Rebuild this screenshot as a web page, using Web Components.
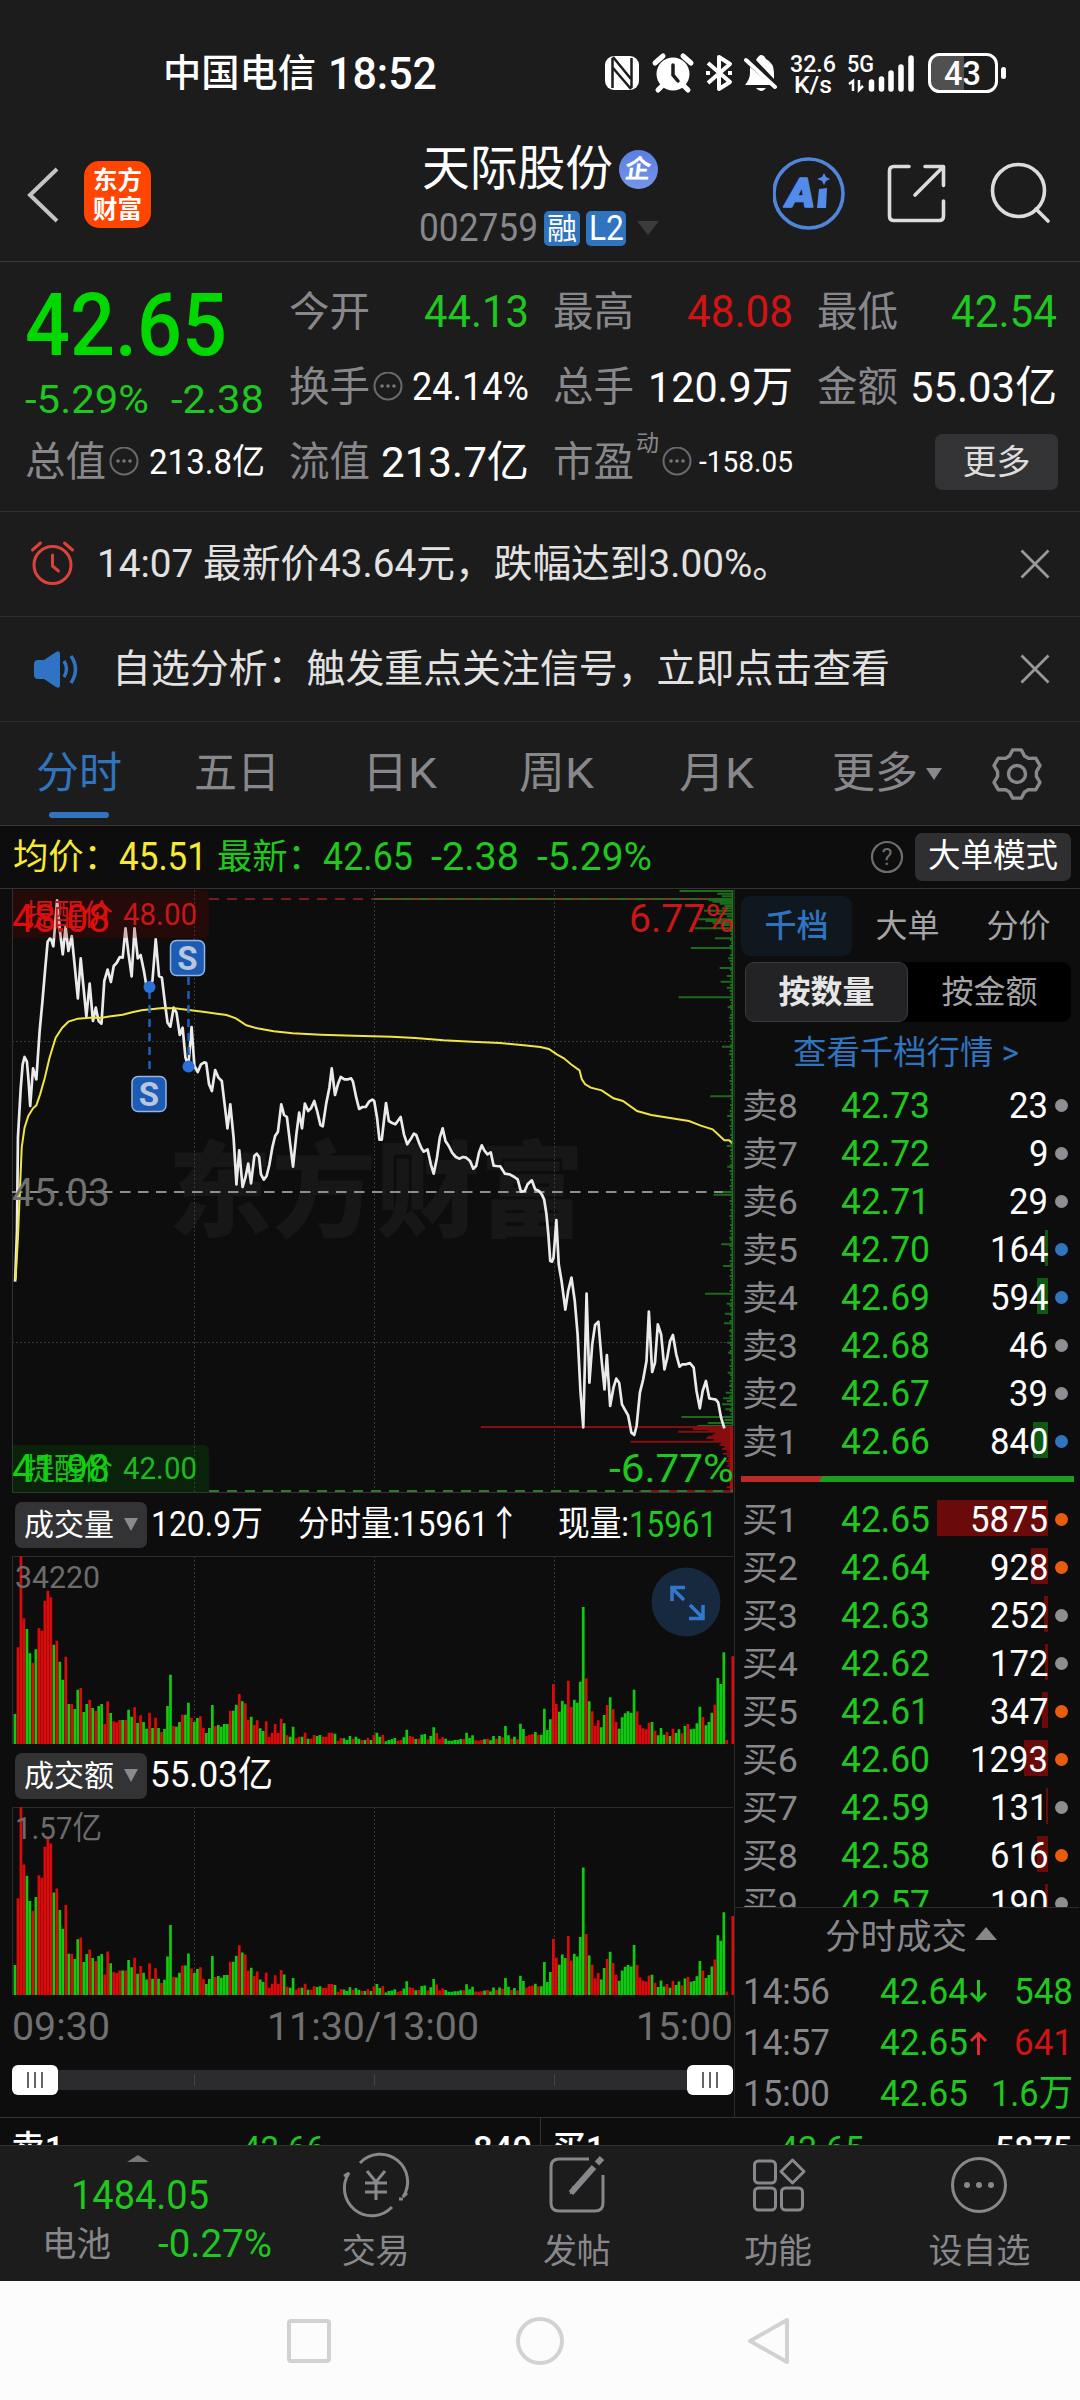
<!DOCTYPE html>
<html lang="zh-CN">
<head>
<meta charset="utf-8">
<title>天际股份 002759</title>
<style>
  body {
    margin: 0;
    width: 1080px;
    background: #0d0d0d;
    color: #fff;
    font-family: Roboto, "Noto Sans CJK SC", sans-serif;
  }
</style>
</head>
<body>
<stock-page></stock-page>

<script>
const UP = "#d01313";
const GREEN = "#1fc71f";

function define(name, html, setup) {
  const template = document.createElement("template");
  template.innerHTML = html;
  customElements.define(name, class extends HTMLElement {
    constructor() {
      super();
      this.attachShadow({ mode: "open" });
      this.shadowRoot.append(template.content.cloneNode(true));
    }
    connectedCallback() {
      if (setup) setup(this, this.shadowRoot);
    }
  });
}

/* ---------- status bar ---------- */
define("status-bar", `
<style>
  :host { display: flex; height: 96px; padding-top: 50px; box-sizing: border-box; background: #1c1c1c; }
  .left { display: flex; gap: 12px; width: 437px; margin-left: 163px; line-height: 47px; font-size: 38px; font-weight: 500; }
  svg { display: block; }
</style>
<div class="left">
  <fit-text w="153">中国电信</fit-text>
  <fit-text w="109" style="font-size:45px">18:52</fit-text>
</div>
<svg width="410" height="46" viewBox="600 50 410 46" fill="#fff">
  <rect x="605" y="56" width="34" height="34" rx="9"/>
  <path d="M612.500 58v30M631.500 58v30" stroke="#1c1c1c" stroke-width="2.500"/>
  <path d="M613 57l18 22M613 68l18 21" stroke="#1c1c1c" stroke-width="2.500"/>
  <circle cx="673" cy="74" r="16.5"/>
  <path d="M655 63l8-7M691 63l-8-7M662 86l-4 4M684 86l4 4" stroke="#fff" stroke-width="5" stroke-linecap="round"/>
  <path d="M673 65v10l5 6" fill="none" stroke="#1c1c1c" stroke-width="3.500" stroke-linecap="round"/>
  <path d="M708 63l22 19-11 7V57l11 7-22 19" fill="none" stroke="#fff" stroke-width="4" stroke-linejoin="round"/>
  <path d="M706 73h4M728 73h4" stroke="#fff" stroke-width="4"/>
  <path d="M756 60q3-5 5-5q3 0 5 4q8 4 8 14v6zM750 67l21 18h-26q5-6 5-12zM756 88h10q-5 6-10 0z"/>
  <path d="M746 60l29 27" stroke="#fff" stroke-width="4" stroke-linecap="round"/>
  <text x="790" y="71.500" font-size="24" font-weight="500" textLength="46" lengthAdjust="spacingAndGlyphs">32.6</text>
  <text x="794" y="92.500" font-size="24" font-weight="500" textLength="38" lengthAdjust="spacingAndGlyphs">K/s</text>
  <text x="847" y="72" font-size="24" font-weight="500" textLength="27" lengthAdjust="spacingAndGlyphs">5G</text>
  <path d="M849 84l4-3v10M859 80v10l4-4" fill="none" stroke="#fff" stroke-width="2.500"/>
  <path d="M871.500 82v7M881.500 79v10M891 73v16M901 67v22M911 58v31" stroke="#fff" stroke-width="5.500" stroke-linecap="round"/>
  <path d="M938 55h26v36h-26q-8 0-8-8V63q0-8 8-8z" fill="#505050"/>
  <rect x="929.500" y="54.500" width="67" height="37" rx="10" fill="none" stroke="#fff" stroke-width="3"/>
  <rect x="1001" y="67" width="5" height="12" rx="2.500"/>
  <text x="944" y="85" font-size="34" font-weight="500" textLength="37" lengthAdjust="spacingAndGlyphs">43</text>
</svg>
`);

/* ---------- title bar ---------- */
define("title-bar", `
<style>
  :host { display: flex; height: 165px; background: #1c1c1c; border-bottom: 1px solid #373737; }
  .nav { display: flex; gap: 25px; width: 394px; padding: 65px 0 0 25px; }
  svg { display: block; }
  .logo {
    display: grid; place-content: center; width: 67px; height: 67px; border-radius: 15px;
    background: #ff4500; font-size: 24.500px; line-height: 29px; font-weight: 700; text-align: center;
  }
  .name { display: flex; align-items: center; gap: 6px; height: 60px; margin: 43px 0 0 3px; font-size: 48px; line-height: 60px; }
  .badge {
    display: grid; place-items: center; width: 39px; height: 39px; border-radius: 50%;
    background: linear-gradient(#5b7fe2, #7595ea); font-size: 26px; font-weight: 700; line-height: 39px;
  }
  .badge i { transform: skewX(-8deg); font-style: normal; }
  .code { display: flex; align-items: center; gap: 6px; height: 58px; font-size: 38px; line-height: 58px; color: #88888c; }
  .tag { height: 35px; border-radius: 5px; background: #3073be; color: #fff; font-size: 30px; line-height: 35px; text-align: center; }
  .tools { margin: 60px 0 0 auto; padding-right: 25px; }
</style>
<div class="nav">
  <svg width="34" height="68" viewBox="25 161 34 68"><path d="M57 169L30 195l27 26" fill="none" stroke="#c4c4c4" stroke-width="4"/></svg>
  <div class="logo"><span>东方</span><span>财富</span></div>
</div>
<div>
  <div class="name"><fit-text w="191">天际股份</fit-text><span class="badge"><i>企</i></span></div>
  <div class="code"><fit-text w="119">002759</fit-text>
    <span class="tag" style="width:36px">融</span><span class="tag" style="width:40px;font-size:35px"><fit-text w="35">L2</fit-text></span>
    <svg width="28" height="14" viewBox="0 0 28 14"><path d="M5 0h22L16 14z" fill="#3c3c3c"/></svg>
  </div>
</div>
<svg class="tools" width="282" height="76" viewBox="773 157 282 76" fill="none" stroke="#dcdcdc" stroke-width="3.600" stroke-linecap="round" stroke-linejoin="round">
  <g stroke="#4f86d9"><circle cx="808.500" cy="194.500" r="34.500"/></g>
  <text x="786" y="208" fill="#528bea" stroke="#528bea" stroke-width="1.500" font-size="40" font-weight="900" font-style="italic" textLength="29" lengthAdjust="spacingAndGlyphs">A</text>
  <path d="M819 190l8-1-1 20h-9z" fill="#528bea" stroke="none"/>
  <path d="M824 174l2 4 4 2-4 2-2 4-2-4-5-2 5-2z" fill="#528bea" stroke="none"/>
  <path d="M909 167.500h-15q-4.500 0-4.500 4.500v45q0 4.500 4.500 4.500h45q4.500 0 4.500-4.500v-15M925 167.500h18.500v19M942 169l-27 27"/>
  <circle cx="1018.500" cy="191.500" r="26"/><path d="M1036 210l12 12"/>
</svg>
`);

/* ---------- quote header ---------- */
define("dots-icon", `
<style>:host { display: block; } svg { display: block; }</style>
<svg width="32" height="32" viewBox="0 0 32 32" fill="#77777b"><circle cx="16" cy="14" r="13.500" fill="none" stroke="#6a6a6e" stroke-width="2"/>
<circle cx="10" cy="14" r="1.800"/><circle cx="16" cy="14" r="1.800"/><circle cx="22" cy="14" r="1.800"/></svg>
`);

define("quote-panel", `
<style>
  :host {
    display: grid; grid-template-columns: repeat(4, 240px); column-gap: 24px; grid-template-rows: repeat(3, 75px);
    height: 250px; padding: 13px 24px 0 25px; box-sizing: border-box; background: #1c1c1c;
    border-bottom: 1px solid #303030; font-size: 44px; line-height: 75px;
  }
  .main { grid-row: span 2; color: #00d800; }
  .main > fit-text { display: block; font-size: 88px; font-weight: 500; line-height: 99px; }
  .change { display: flex; justify-content: space-between; font-size: 39px; line-height: 53px; color: ${GREEN}; width: 239px; }
  .cell { display: flex; align-items: center; justify-content: space-between; }
  .cell b { font-weight: 400; font-size: 40.500px; color: #88888c; display: flex; align-items: center; gap: 2px; }
  .up { color: ${UP}; } .down { color: ${GREEN}; }
  sup { font-size: 23px; line-height: 23px; align-self: flex-start; margin-top: 7px; }
  .more { justify-self: end; align-self: center; margin: -2px -1px 0 0; width: 123px; height: 56px; border-radius: 7px; background: #333335; color: #ddd; font-size: 34px; line-height: 56px; text-align: center; }
</style>
<div class="main">
  <fit-text w="202">42.65</fit-text>
  <div class="change"><fit-text w="124">-5.29%</fit-text><fit-text w="93">-2.38</fit-text></div>
</div>
<div class="cell"><b>今开</b><fit-text class="down" w="105">44.13</fit-text></div>
<div class="cell"><b>最高</b><fit-text class="up" w="106">48.08</fit-text></div>
<div class="cell"><b>最低</b><fit-text class="down" w="106">42.54</fit-text></div>
<div class="cell"><b>换手<dots-icon></dots-icon></b><fit-text w="117" style="font-size:38px">24.14%</fit-text></div>
<div class="cell"><b>总手</b><fit-text w="145" style="font-size:43px">120.9万</fit-text></div>
<div class="cell"><b>金额</b><fit-text w="147" style="font-size:43px">55.03亿</fit-text></div>
<div class="cell"><b>总值<dots-icon></dots-icon></b><fit-text w="116" style="font-size:35px">213.8亿</fit-text></div>
<div class="cell"><b>流值</b><fit-text w="148" style="font-size:43px">213.7亿</fit-text></div>
<div class="cell"><b>市盈<sup>动</sup><dots-icon></dots-icon></b><fit-text w="94" style="font-size:29px">-158.05</fit-text></div>
<div class="more">更多</div>
`);

/* ---------- notices ---------- */
define("notice-row", `
<style>
  :host { display: flex; align-items: center; height: 104px; border-bottom: 1px solid #2c2c2c; background: #1c1c1c; color: #e2e2e2; font-size: 39px; line-height: 104px; }
  .close { margin-left: auto; margin-right: 29px; }
  svg { display: block; }
</style>
<slot name="icon"></slot><slot></slot>
<svg class="close" width="32" height="32" viewBox="0 0 32 32"><path d="M2.500 2.500l27 27M29.500 2.500l-27 27" stroke="#999" stroke-width="2.800"/></svg>
`);

/* ---------- period tabs ---------- */
define("period-tabs", `
<style>
  :host { display: flex; align-items: center; height: 103px; background: #1c1c1c; border-bottom: 1px solid #373737; font-size: 43px; line-height: 103px; color: #88888c; }
  .on { color: #3073be; display: grid; justify-items: center; }
  .on::after { content: ""; width: 60px; height: 6px; margin-top: -13px; margin-bottom: 7px; border-radius: 3px; background: #3073be; }
  span { flex: none; } svg { display: block; }
</style>
<span class="on" style="margin-left:36px">分时</span>
<span style="margin-left:72px">五日</span>
<span style="margin-left:82px"><fit-text w="75">日K</fit-text></span>
<span style="margin-left:82px"><fit-text w="75">周K</fit-text></span>
<span style="margin-left:85px"><fit-text w="75">月K</fit-text></span>
<span style="margin-left:78px">更多</span>
<svg width="16" height="12" viewBox="0 0 16 12" style="margin-left:8px"><path d="M0 0h16L8 12z" fill="#88888c"/></svg>
<svg class="gear" width="54" height="54" viewBox="-27 -27 54 54" style="margin-left:48px" fill="none" stroke="#88888c" stroke-width="3.400" stroke-linejoin="round"><path/><circle r="8.500"/></svg>
`, (host, root) => {
  const points = [];
  for (let k = 0; k < 6; k++) {
    for (const [a, r] of [[-23, 19.5], [-10, 24.5], [10, 24.5], [23, 19.5]]) {
      const t = (k * 60 + a - 90) * Math.PI / 180;
      points.push((r * Math.cos(t)).toFixed(1) + " " + (r * Math.sin(t)).toFixed(1));
    }
  }
  root.querySelector(".gear path").setAttribute("d", "M" + points.join("L") + "Z");
});

define("average-bar", `
<style>
  :host { display: flex; height: 63px; align-items: center; font-size: 35px; line-height: 63px; color: ${GREEN}; padding-left: 13px; border-bottom: 1px solid #333; box-sizing: border-box; }
  .avg { color: #f7ea35; } fit-text { flex: none; }
  .mode { width: 156px; height: 48px; border-radius: 7px; background: #2f2f31; color: #fff; font-size: 32.500px; line-height: 47px; text-align: center; margin-right: 9px; }
  svg { margin-left: auto; margin-right: 11px; }
</style>
<fit-text class="avg" w="106">均价：</fit-text><fit-text class="avg" w="88" style="font-size:38px">45.51</fit-text>
<fit-text w="106" style="margin-left:10px">最新：</fit-text><fit-text w="90" style="font-size:38px">42.65</fit-text>
<fit-text w="88" style="font-size:38px;margin-left:18px">-2.38</fit-text>
<fit-text w="115" style="font-size:38px;margin-left:18px">-5.29%</fit-text>
<svg width="34" height="34" viewBox="0 0 34 34"><circle cx="17" cy="17" r="15" fill="none" stroke="#6e6e72" stroke-width="2.200"/><text x="17" y="25" font-size="23" fill="#6e6e72" text-anchor="middle">?</text></svg>
<span class="mode">大单模式</span>
`);

/* ---------- price chart ---------- */
// chart points live on a 1553-wide grid, three units to a pixel vertically
const price = "32,1232 36,1080 38,800 44,650 48,580 52,558 57,572 60,620 64,705 70,592 77,625 84,480 90,390 96,290 101,212 106,202 109,208 113,226 121,88 127,180 133,250 139,168 145,240 152,195 158,280 165,382 171,262 177,350 183,437 190,338 197,450 203,410 209,450 215,458 221,330 228,296 235,333 241,285 247,276 254,258 260,260 266,172 272,245 279,316 285,172 292,262 298,252 305,300 311,350 317,340 323,330 330,205 337,315 343,320 349,390 355,455 361,467 368,410 374,425 381,492 387,470 393,560 399,585 406,468 412,585 419,603 426,580 433,574 437,576 443,640 449,660 456,597 463,620 470,630 476,700 482,772 488,700 495,800 501,940 507,838 514,948 520,920 526,878 532,937 539,855 544,848 549,858 553,910 559,926 565,915 571,880 577,830 583,795 589,782 596,700 602,732 608,738 615,820 621,887 628,790 634,725 640,772 646,698 653,720 659,712 666,690 672,720 679,762 684,766 691,700 698,650 703,592 710,672 716,640 722,618 730,625 738,625 744,622 748,632 755,680 761,714 768,708 775,708 782,692 789,686 793,690 799,740 804,806 809,806 818,696 824,750 831,756 838,760 843,750 849,738 856,790 863,820 870,805 877,788 882,792 888,815 893,832 898,842 906,835 913,880 919,908 926,860 932,800 938,772 944,810 951,825 958,845 966,858 974,863 981,858 988,860 996,870 1003,893 1009,885 1015,845 1021,823 1027,840 1033,850 1040,844 1046,884 1052,885 1060,886 1070,908 1080,910 1090,918 1097,925 1104,962 1112,960 1118,940 1127,928 1134,955 1142,960 1148,970 1153,985 1158,1030 1162,1090 1166,1170 1170,1172 1173,1160 1179,1047 1184,1180 1190,1230 1198,1316 1204,1260 1211,1220 1218,1290 1224,1390 1230,1560 1236,1669 1239,1500 1243,1268 1249,1535 1255,1420 1261,1362 1268,1352 1275,1470 1281,1555 1286,1452 1293,1605 1300,1550 1306,1523 1312,1535 1318,1600 1325,1618 1331,1633 1338,1685 1344,1692 1349,1665 1356,1565 1363,1525 1370,1470 1375,1322 1382,1503 1388,1475 1394,1360 1401,1390 1408,1495 1414,1460 1420,1410 1426,1392 1433,1450 1440,1487 1446,1480 1454,1480 1462,1476 1470,1490 1476,1560 1483,1612 1489,1560 1496,1530 1503,1582 1510,1584 1517,1586 1522,1595 1528,1640 1535,1672";
const average = "33,1225 38,1100 46,830 52,770 60,735 70,712 77,703 85,670 95,620 105,560 118,500 132,470 145,452 165,443 190,440 215,440 235,436 260,431 280,424 300,418 320,415 345,411 370,412 400,417 430,422 460,428 480,432 500,442 522,463 545,472 580,481 620,487 680,491 750,494 830,497 880,501 940,508 1000,512 1060,516 1110,523 1145,528 1163,534 1180,550 1195,562 1210,580 1228,598 1233,625 1240,640 1252,650 1275,658 1300,682 1320,690 1350,720 1380,732 1420,741 1460,750 1485,764 1510,775 1535,808 1545,808 1553,818";
// order depth: y, left end
const asks = [[60,1440],[68,1520],[76,1530],[84,1500],[88,1502],[92,1510],[98,1525],[105,1535],[112,1530],[119,1492],[128,1520],[136,1540],[145,1480],[150,1495],[156,1510],[162,1530],[172,1472],[202,1515],[231,1464],[262,1543],[291,1525],[315,1540],[332,1527],[350,1540],[379,1438],[409,1542],[440,1545],[527,1530],[550,1545],[676,1505],[735,1541],[825,1540],[887,1541],[963,1532],[971,1512],[1100,1545],[1120,1528],[1185,1532],[1268,1494],[1298,1540],[1328,1536],[1357,1534],[1380,1545],[1415,1541],[1445,1543],[1505,1542],[1545,1545],[1565,1538],[1582,1532],[1590,1540],[1600,1530],[1615,1537],[1638,1444],[1647,1535],[1656,1500],[1665,1478]];
const bids = [[1668,1019],[1674,1468],[1678,1500],[1682,1437],[1687,1515],[1692,1510],[1697,1500],[1701,1497],[1706,1512],[1712,1336],[1717,1528],[1722,1525],[1728,1535],[1734,1530],[1741,1540],[1748,1532],[1756,1540],[1763,1543],[1770,1536],[1778,1543],[1786,1540],[1794,1545],[1802,1542],[1812,1545],[1824,1543],[1836,1546],[1848,1540],[1860,1355]];

define("price-chart", `
<style>
  :host { display: block; height: 604px; }
  svg { display: block; }
  .grid path { stroke: #3a3a3a; stroke-width: 1; stroke-dasharray: 2 2; }
  .lines * { vector-effect: non-scaling-stroke; fill: none; }
  .s rect { fill: #1c5cb4; stroke: #96b4de; stroke-width: 1.500; }
  .s text { fill: #b8c6de; font-size: 33px; font-weight: 700; text-anchor: middle; }
</style>
<svg width="734" height="604" viewBox="0 888 734 604">
  <text x="168" y="1228" font-size="104" font-weight="900" fill="#171717" textLength="416" lengthAdjust="spacingAndGlyphs">东方财富</text>
  <g class="grid"><path d="M194.500 889v602M374.500 889v602M554.500 889v602M12 1040.500h721M12 1341.500h721"/></g>
  <path d="M12.500 888v603.500H733" fill="none" stroke="#333"/>
  <path d="M12 1191h720" stroke="#8e8e8e" stroke-width="2" stroke-dasharray="10.500 7.500"/>
  <path d="M209 898H374" stroke="#7c1c1c" stroke-width="2" stroke-dasharray="10 8"/>
  <path d="M374 898h359" stroke="#2b6a26" stroke-width="2"/><path d="M374 898h359" stroke="#7a3a1e" stroke-width="1.500" stroke-dasharray="10 8"/>
  <g class="lines" transform="translate(0 870) scale(.4719 .33333)">
    <path class="asks" stroke="#1b6b1b" stroke-width="2"/>
    <path class="bids" stroke="#850f0f" stroke-width="2"/>
    <polyline class="price" stroke="#ebebeb" stroke-width="2.700" stroke-linejoin="round"/>
    <polyline class="avg" stroke="#f2e443" stroke-width="2"/>
  </g>
  <path d="M732.500 889v536" stroke="#1a7a1a" stroke-width="1.500"/><path d="M731.500 1426v65" stroke="#b00c0c" stroke-width="3"/>
  <path d="M209 1490H733" stroke="#2e7a28" stroke-width="2" stroke-dasharray="10 8"/>
  <path d="M12 889h191q6 0 6 6v36q0 6-6 6H12z" fill="#7a0000" fill-opacity=".22"/>
  <path d="M12 1444h191q6 0 6 6v41H12z" fill="#007a00" fill-opacity=".2"/>
  <g font-size="30" fill="#c81717">
    <text x="25" y="924" textLength="88">提醒价</text>
    <text x="123" y="923.500" font-size="32" textLength="74" lengthAdjust="spacingAndGlyphs">48.00</text>
    <text x="25" y="1478" fill="#1fb81f" textLength="88">提醒价</text>
    <text x="123" y="1477.500" font-size="32" fill="#1fb81f" textLength="74" lengthAdjust="spacingAndGlyphs">42.00</text>
  </g>
  <g font-size="38" fill="#e00c0c">
    <text x="12" y="930.500" textLength="98" lengthAdjust="spacingAndGlyphs">48.08</text>
    <text x="629" y="930.500" fill="#c81717" textLength="105" lengthAdjust="spacingAndGlyphs">6.77%</text>
    <text x="12" y="1205" fill="#707070" textLength="98" lengthAdjust="spacingAndGlyphs">45.03</text>
    <text x="12" y="1481" fill="#10d010" textLength="98" lengthAdjust="spacingAndGlyphs">41.98</text>
    <text x="609" y="1481" fill="#1fc71f" textLength="125" lengthAdjust="spacingAndGlyphs">-6.77%</text>
  </g>
  <path d="M149.500 990v84M188.500 976v86" stroke="#1f5fba" stroke-width="2.500" stroke-dasharray="8 6"/>
  <circle cx="149.500" cy="986" r="6" fill="#2a70d8"/><circle cx="188.500" cy="1065.500" r="6" fill="#2a70d8"/>
  <g class="s"><rect x="170.500" y="939.500" width="34" height="35" rx="6"/><text x="187.500" y="969">S</text>
  <rect x="132" y="1075.500" width="34" height="35" rx="6"/><text x="149" y="1105">S</text></g>
</svg>
`, (host, root) => {
  const rungs = list => list.map(([y, x]) => `M${x} ${y}H1553`).join("");
  const small = [];
  for (let y = 180, k = 0; y < 1640; y += 9, k++) small.push([y, 1546 + (k * 7) % 5]);
  root.querySelector(".asks").setAttribute("d", rungs(asks.concat(small)));
  root.querySelector(".bids").setAttribute("d", rungs(bids));
  root.querySelector(".price").setAttribute("points", price);
  root.querySelector(".avg").setAttribute("points", average);
});

/* ---------- volume charts ---------- */
// one bar a minute: g = down, r = up
const minutes = "g90 r290 r563 r377 g345 g272 r244 g284 r347 r340 r430 r460 r440 g298 r310 g247 g193 r262 g120 r120 g105 g163 r168 g96 g120 r133 g108 r100 g114 g120 r60 r128 g93 r68 r65 r72 g72 r72 g103 g82 r110 g63 r86 g66 g46 r94 g48 r79 g48 r36 g45 g114 g208 r54 g52 g66 r88 g88 g124 r79 g66 g78 r83 r48 g33 g48 g117 r54 g57 g52 g60 g60 r100 g100 g118 r150 g128 r122 r73 g82 r57 r71 g47 g39 r68 r22 r34 r60 r33 r76 g62 r26 g22 g52 r17 r22 g22 r34 g16 r16 r27 g24 g27 r22 r22 r34 r34 g31 r10 r18 g17 g12 g24 r16 g22 g16 r12 g12 r18 g12 r27 g34 g22 r28 g8 g12 g14 g18 r10 r12 g20 g43 r24 r22 g15 r16 g28 g30 r14 g24 g50 r33 r14 r20 g16 g10 g10 g12 g12 g15 r15 g34 g18 g26 r11 r10 r12 g14 r16 g11 g24 r16 g24 r20 g54 g26 r16 g22 r14 g61 g45 r24 r28 r30 g36 r28 g28 g106 g42 g74 r180 r120 g97 g130 g119 r190 r111 g133 g124 g187 g411 r197 g128 r98 r54 r71 g50 g87 r117 g140 r104 r66 g46 g80 g92 g98 g93 g163 r98 r57 r47 r44 r64 g66 r40 g26 g48 g28 r36 g24 r46 g33 g44 r32 g54 r60 g44 g46 g62 g112 r81 g56 g66 g94 r118 g198 g180 g275 r12 r0 r263".split(" ");

define("volume-chart", `
<style>
  :host { display: block; height: 188px; }
  svg { display: block; }
</style>
<svg width="734" height="188" viewBox="0 0 734 188">
  <path d="M194.500 0v188M374.500 0v188M554.500 0v188" stroke="#3a3a3a" stroke-dasharray="2 2"/>
  <path d="M733 .5H12.500V188" fill="none" stroke="#2c2c2c"/>
  <path class="g" fill="#0fcb0f"/><path class="r" fill="#dc0a0a"/>
  <text x="15" y="32" font-size="32" fill="#6b6b6b" lengthAdjust="spacingAndGlyphs"></text>
  <g class="expand" fill="none" stroke="#3379cb" stroke-width="3.500">
    <circle cx="686" cy="46" r="34.500" fill="#16293f" stroke="none"/>
    <path d="M672 45V31.500h13M671 31l13 13M703 49v13.500h-14M704 63l-14-14"/>
  </g>
</svg>
`, (host, root) => {
  const amount = host.getAttribute("kind") === "amount";
  const d = { g: "", r: "" };
  minutes.forEach((m, i) => {
    let h = Number(m.slice(1)) / 3;
    if (amount && i > 2) h *= 1.04 - .11 * i / 190;
    const x = 13.6 + i * 2.991;
    d[m[0]] += `M${x.toFixed(2)} 188v${(-h).toFixed(1)}h2.7v${h.toFixed(1)}z`;
  });
  root.querySelector(".g").setAttribute("d", d.g);
  root.querySelector(".r").setAttribute("d", d.r);
  const label = root.querySelector("text");
  label.textContent = host.getAttribute("max");
  label.setAttribute("textLength", amount ? 87 : 85);
  if (amount) root.querySelector(".expand").remove();
});

define("pick-button", `
<style>
  :host { display: flex; align-items: center; gap: 10px; width: 132px; height: 46px; border-radius: 7px; background: #333335; box-sizing: border-box; padding-left: 9px; font-size: 30px; line-height: 46px; flex: none; }
</style>
<slot></slot><svg width="14" height="13" viewBox="0 0 14 13"><path d="M0 0h14L7 13z" fill="#8a8a8e"/></svg>
`);

define("range-slider", `
<style>
  :host { display: flex; align-items: center; justify-content: space-between; margin: 11px 1px 0 12px; height: 20px; background: linear-gradient(#454548, #454548) 182px 4px / 1px 12px no-repeat, linear-gradient(#454548, #454548) 362px 4px / 1px 12px no-repeat, linear-gradient(#454548, #454548) 542px 4px / 1px 12px no-repeat, #2c2c2e; }
  i { width: 46px; height: 30px; border-radius: 6px; background: #fff; flex: none; }
  svg { display: block; }
</style>
<i><svg width="46" height="30"><path d="M16 7v16M23 7v16M30 7v16" stroke="#666" stroke-width="2"/></svg></i>
<i><svg width="46" height="30"><path d="M16 7v16M23 7v16M30 7v16" stroke="#666" stroke-width="2"/></svg></i>
`);

define("chart-column", `
<style>
  :host { display: block; width: 734px; height: 1228px; }
  .head { display: flex; align-items: center; height: 63px; font-size: 35px; line-height: 63px; padding-left: 15px; }
  .head fit-text { flex: none; }
  .axis { display: flex; justify-content: space-between; height: 64px; line-height: 64px; padding: 0 1px 0 12px; font-size: 39px; color: #707070; }
</style>
<price-chart></price-chart>
<div class="head"><pick-button>成交量</pick-button>
  <fit-text w="112" style="margin-left:4px">120.9万</fit-text>
  <fit-text w="222" style="margin-left:35px">分时量:15961↑</fit-text>
  <fit-text w="71" style="margin-left:38px">现量:</fit-text><fit-text w="88" style="color:${GREEN};font-size:37px">15961</fit-text>
</div>
<volume-chart kind="volume" max="34220"></volume-chart>
<div class="head"><pick-button>成交额</pick-button><fit-text w="123" style="margin-left:3px;font-size:36px">55.03亿</fit-text></div>
<volume-chart kind="amount" max="1.57亿"></volume-chart>
<div class="axis"><fit-text w="98">09:30</fit-text><fit-text w="212">11:30/13:00</fit-text><fit-text w="97">15:00</fit-text></div>
<range-slider></range-slider>
`);

/* ---------- order book ---------- */
const sells = [["卖8","42.73",23,0,"n"],["卖7","42.72",9,0,"n"],["卖6","42.71",29,0,"n"],["卖5","42.70",164,3,"b"],["卖4","42.69",594,11,"b"],["卖3","42.68",46,0,"n"],["卖2","42.67",39,0,"n"],["卖1","42.66",840,15,"b"]];
const buys = [["买1","42.65",5875,111,"o"],["买2","42.64",928,17,"o"],["买3","42.63",252,4,"n"],["买4","42.62",172,3,"n"],["买5","42.61",347,6,"o"],["买6","42.60",1293,24,"o"],["买7","42.59",131,2,"n"],["买8","42.58",616,11,"o"],["买9","42.57",190,3,"n"]];
const dotColors = { n: "#8e8e93", b: "#3073be", o: "#eb5c0a" };

function bookRow([name, cost, count, bar, dot], color) {
  const digits = String(count).length;
  return `<div class="row"><fit-text w="56" class="n">${name}</fit-text><fit-text class="p" w="89">${cost}</fit-text>
    <span class="q" style="background:linear-gradient(${color},${color}) right 4px/${bar}px 36px no-repeat"><fit-text w="${digits * 19.5}">${count}</fit-text></span>
    <i style="background:${dotColors[dot]}"></i></div>`;
}

define("order-book", `
<style>
  :host { display: block; width: 345px; height: 1228px; border-left: 1px solid #2c2c2e; box-sizing: border-box; overflow: hidden; }
  .tabs { display: grid; grid-template-columns: 111px 111px 111px; margin: 7px 0 0 6px; font-size: 32px; line-height: 60px; text-align: center; color: #a4a4a6; }
  .tabs .on { background: #10181f; border-radius: 9px; color: #3073be; font-weight: 500; }
  .seg { display: grid; grid-template-columns: 163px 163px; margin: 6px 0 0 10px; width: 326px; height: 60px; border-radius: 9px; background: #000; font-size: 32px; line-height: 60px; text-align: center; color: #a4a4a6; }
  .seg .on { background: #232325; border: 1px solid #3a3a3c; border-radius: 9px; box-sizing: border-box; color: #e6e6e6; font-weight: 700; line-height: 58px; }
  .link { height: 60px; line-height: 61px; text-align: center; color: #3073be; font-size: 33px; padding-right: 2px; }
  .row { display: flex; height: 48px; line-height: 48px; font-size: 37px; padding-left: 7px; align-items: center; }
  .n { font-size: 34px; color: #88888c; } .p { color: ${GREEN}; margin-left: 43px; }
  .q { width: 112px; height: 48px; margin-left: 6px; display: flex; justify-content: flex-end; font-size: 36px; }
  .row i { width: 13px; height: 13px; border-radius: 50%; margin: -2px 0 0 7px; }
  .ratio { height: 6px; margin: 10px 6px 14px 6px; width: 333px; background: linear-gradient(120deg, #bd2b28 70px, #1d9d1f 71px); }
  .buys { height: 411px; overflow: hidden; border-bottom: 1px solid #2c2c2e; }
  .title { display: flex; align-items: center; justify-content: center; gap: 8px; height: 58px; line-height: 58px; color: #88888c; font-size: 35.500px; padding-left: 8px; }
  .deal { display: flex; height: 51px; line-height: 51px; font-size: 37px; color: ${GREEN}; align-items: center; padding: 0 6px 0 8px; }
  .deal .t { color: #88888c; margin-right: 50px; } .deal .v { margin-left: auto; }
  svg { display: block; }
</style>
<div class="tabs"><span class="on">千档</span><span>大单</span><span>分价</span></div>
<div class="seg"><span class="on">按数量</span><span>按金额</span></div>
<div class="link"><fit-text w="226">查看千档行情 &gt;</fit-text></div>
<div class="sells">${sells.map(r => bookRow(r, "#0f5a12")).join("")}</div>
<div class="ratio"></div>
<div class="buys">${buys.map(r => bookRow(r, "#6b0a0a")).join("")}</div>
<div class="title">分时成交<svg width="22" height="26" viewBox="0 0 22 26"><path d="M0 16h22L11 3z" fill="#88888c"/></svg></div>
<div class="deal"><fit-text class="t" w="87">14:56</fit-text><fit-text w="88">42.64</fit-text>
  <svg width="20" height="24" viewBox="0 0 20 24"><path d="M10.500 0v20M3 13l7.500 7.500L18 13" fill="none" stroke="${GREEN}" stroke-width="3"/></svg><fit-text class="v" w="59">548</fit-text></div>
<div class="deal"><fit-text class="t" w="87">14:57</fit-text><fit-text w="88">42.65</fit-text>
  <svg width="20" height="24" viewBox="0 0 20 24"><path d="M10.500 24V3M3 10l7.500-7.500L18 10" fill="none" stroke="#dd2a26" stroke-width="3"/></svg><fit-text class="v" w="59" style="color:${UP}">641</fit-text></div>
<div class="deal"><fit-text class="t" w="87">15:00</fit-text><fit-text w="88">42.65</fit-text><fit-text class="v" w="82">1.6万</fit-text></div>
`);

/* ---------- bottom ---------- */
define("best-row", `
<style>
  :host { display: grid; grid-template-columns: 540px 540px; height: 28px; overflow: hidden; border-top: 1px solid #333; box-sizing: border-box; font-size: 34px; font-weight: 500; line-height: 60px; }
  div { display: flex; justify-content: space-between; padding: 0 8px 0 11px; height: 60px; }
  div + div { border-left: 1px solid #333; } em { font-style: normal; color: ${GREEN}; font-weight: 400; }
</style>
<div><fit-text w="53">卖1</fit-text><em style="margin-left:30px"><fit-text w="83">42.66</fit-text></em><fit-text w="59">840</fit-text></div>
<div><fit-text w="53">买1</fit-text><em style="margin-left:42px"><fit-text w="85">42.65</fit-text></em><fit-text w="77">5875</fit-text></div>
`);

define("tab-item", `
<style>
  :host { display: block; text-align: center; font-size: 34px; line-height: 50px; color: #88888c; }
  slot[name=icon] { display: block; }
  div { margin-top: 6px; }
</style>
<slot name="icon"></slot><div><slot></slot></div>
`);

define("bottom-bar", `
<style>
  :host { display: grid; grid-template-columns: 275px repeat(4, 201.250px); height: 136px; background: #1c1c1c; border-top: 1px solid #303030; box-sizing: border-box; }
  .index { color: ${GREEN}; font-size: 40px; }
  .index > svg { display: block; margin: 9px 0 0 127px; }
  .value { line-height: 52px; margin: 8px 0 0 71px; }
  .sector { display: flex; justify-content: space-between; margin-left: 42px; width: 230px; line-height: 50px; font-size: 38px; margin-top: -3px; }
  .sector b { font-weight: 400; font-size: 34.500px; color: #88888c; }
  tab-item svg { display: block; margin: 4px auto 0; }
</style>
<div class="index">
  <svg width="22" height="7" viewBox="0 0 22 7"><path d="M0 7h22L11 0z" fill="#77777b"/></svg>
  <div class="value"><fit-text w="138">1484.05</fit-text></div>
  <div class="sector"><b>电池</b><fit-text w="114">-0.27%</fit-text></div>
</div>
<tab-item><svg slot="icon" width="70" height="70" viewBox="-35 -35 70 70" fill="none" stroke="#88888c" stroke-width="3"><path d="M-16 -22A27.500 27.500 0 0 1 27 12L31 8M27 14l-4 0M16 22A27.500 27.500 0 0 1 -27 -12L-32 -9M-27 -14"/><path d="M-9 -14L0 -3L9 -14M0 -3V15M-11 -2H11M-11 7H11"/></svg>交易</tab-item>
<tab-item><svg slot="icon" width="70" height="70" viewBox="-35 -35 70 70" fill="none" stroke="#88888c" stroke-width="3" stroke-linejoin="round"><path d="M12 -26H-18Q-26 -26 -26 -18V18Q-26 26 -18 26H18Q26 26 26 18V-10"/><path d="M-6 8L17 -18" stroke-width="6"/><path d="M-7 9l3-8 4 3z" fill="#88888c" stroke-width="1"/><path d="M20 -21.500L25 -27" stroke-width="6"/></svg>发帖</tab-item>
<tab-item><svg slot="icon" width="70" height="70" viewBox="-35 -35 70 70" fill="none" stroke="#88888c" stroke-width="3" stroke-linejoin="round"><rect x="-23.500" y="-24" width="21" height="22" rx="4"/><rect x="-23.500" y="3" width="21" height="22" rx="4"/><rect x="3.500" y="3" width="21" height="22" rx="4"/><path d="M14.500 -25L26 -13.500L14.500 -2L3 -13.500Z"/></svg>功能</tab-item>
<tab-item><svg slot="icon" width="70" height="70" viewBox="-35 -35 70 70" fill="#88888c"><circle r="26.500" fill="none" stroke="#88888c" stroke-width="3"/><circle cx="-12" r="3"/><circle r="3"/><circle cx="12" r="3"/></svg>设自选</tab-item>
`);

define("system-nav", `
<style>:host { display: block; height: 120px; background: #fcfcfc; } svg { display: block; }</style>
<svg width="1080" height="120" fill="none" stroke="#d2d2d2" stroke-width="4" stroke-linejoin="round">
  <rect x="289" y="40" width="40" height="40" rx="2"/><circle cx="540" cy="60" r="22"/><path d="M787 39v42L750 60z"/>
</svg>
`);

define("stock-page", `
<style>
  :host { display: block; width: 1080px; height: 2400px; overflow: hidden; }
  .body { display: flex; }
  svg { display: block; flex: none; }
</style>
<status-bar></status-bar>
<title-bar></title-bar>
<quote-panel></quote-panel>
<notice-row>
  <svg slot="icon" width="97" height="50" viewBox="0 0 97 50" fill="none" stroke="#dc423c" stroke-width="3" stroke-linecap="round" stroke-linejoin="round"><circle cx="52.500" cy="26" r="18.500"/><path d="M52.500 16v11l6 5M32.500 11l8-7M72.500 11l-8-7"/></svg>
  <fit-text w="694">14:07 最新价43.64元，跌幅达到3.00%。</fit-text>
</notice-row>
<notice-row>
  <svg slot="icon" width="112" height="40" viewBox="0 0 112 40" fill="#3073c4"><path d="M34 15q0-4 4-4h6l12-8q4-2 4 2v31q0 4-4 2l-12-8h-6q-4 0-4-4z"/><path d="M64 12q5 8 0 16M71 7q9 13 0 27" fill="none" stroke="#3073c4" stroke-width="3.500"/></svg>
  <fit-text w="778">自选分析：触发重点关注信号，立即点击查看</fit-text>
</notice-row>
<period-tabs></period-tabs>
<average-bar></average-bar>
<div class="body"><chart-column></chart-column><order-book></order-book></div>
<best-row></best-row>
<bottom-bar></bottom-bar>
<system-nav></system-nav>
`);

// text squeezed or stretched to a given width
class FitText extends HTMLElement {
  constructor() {
    super();
    this.attachShadow({ mode: "open" });
    this.shadowRoot.innerHTML = `<style>
      :host { display: inline-block; white-space: nowrap; text-align: left; }
      span { display: inline-block; transform-origin: 0 50%; }
    </style><span><slot></slot></span>`;
  }
  connectedCallback() {
    const span = this.shadowRoot.querySelector("span");
    const width = Number(this.getAttribute("w"));
    const natural = span.getBoundingClientRect().width;
    this.style.width = width + "px";
    span.style.transform = `scaleX(${width / natural})`;
  }
}
customElements.define("fit-text", FitText);
</script>
</body>
</html>
